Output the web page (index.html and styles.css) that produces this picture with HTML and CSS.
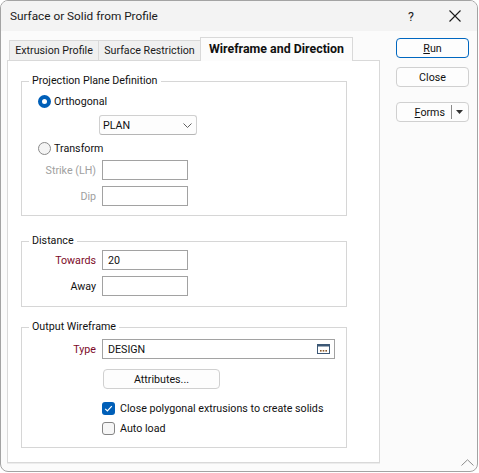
FILE: index.html
```html
<!DOCTYPE html>
<html>
<head>
<meta charset="utf-8">
<title>Surface or Solid from Profile</title>
<link rel="stylesheet" href="styles.css">
</head>
<body>
<div class="window">
  <div class="titlebar">
    <span class="title">Surface or Solid from Profile</span>
    <span class="help">?</span>
    <span class="closex">
      <svg width="12" height="12" viewBox="0 0 12 12"><path d="M0.5 0.5 L11.5 11.5 M11.5 0.5 L0.5 11.5" stroke="#1a1a1a" stroke-width="1.1" fill="none"/></svg>
    </span>
  </div>
  <div class="main">
    <div class="left">
      <div class="tabs">
        <div class="tab t1">Extrusion Profile</div>
        <div class="tab t2">Surface Restriction</div>
        <div class="tab active">Wireframe and Direction</div>
      </div>
      <div class="panel">
        <fieldset class="group g1">
          <legend>Projection Plane Definition</legend>
          <div class="radio-row r1"><span class="radio on"></span><span class="opt">Orthogonal</span></div>
          <div class="select"><span>PLAN</span>
            <svg class="chev" width="9" height="5" viewBox="0 0 9 5"><path d="M0.5 0.5 L4.5 4.5 L8.5 0.5" stroke="#606060" stroke-width="1" fill="none"/></svg>
          </div>
          <div class="radio-row r2"><span class="radio"></span><span class="opt">Transform</span></div>
          <div class="field f-strike"><span class="lbl disabled">Strike (LH)</span><span class="input short"></span></div>
          <div class="field f-dip"><span class="lbl disabled">Dip</span><span class="input short"></span></div>
        </fieldset>

        <fieldset class="group g2">
          <legend>Distance</legend>
          <div class="field f-towards"><span class="lbl req">Towards</span><span class="input short">20</span></div>
          <div class="field f-away"><span class="lbl">Away</span><span class="input short"></span></div>
        </fieldset>

        <fieldset class="group g3">
          <legend>Output Wireframe</legend>
          <div class="field f-type"><span class="lbl req">Type</span>
            <span class="input long"><span>DESIGN</span>
              <svg class="browse" width="13" height="10" viewBox="0 0 13 10">
                <rect x="0.5" y="0.5" width="12" height="9" fill="#ffffff" stroke="#3d5876" stroke-width="1"/>
                <rect x="0.5" y="0.5" width="12" height="2" fill="#3d5876"/>
                <rect x="3" y="6" width="1.6" height="1.6" fill="#8a5a2a"/>
                <rect x="5.7" y="6" width="1.6" height="1.6" fill="#8a5a2a"/>
                <rect x="8.4" y="6" width="1.6" height="1.6" fill="#8a5a2a"/>
              </svg>
            </span>
          </div>
          <div class="btn attr">Attributes...</div>
          <div class="check-row c1"><span class="check on">
            <svg width="13" height="13" viewBox="0 0 13 13"><path d="M3.2 6.8 L5.4 9 L9.8 4.2" stroke="#ffffff" stroke-width="1.2" fill="none"/></svg>
          </span><span class="opt">Close polygonal extrusions to create solids</span></div>
          <div class="check-row c2"><span class="check"></span><span class="opt">Auto load</span></div>
        </fieldset>
      </div>
    </div>
    <div class="right">
      <div class="btn side run"><span><u>R</u>un</span></div>
      <div class="btn side close">Close</div>
      <div class="btn side forms">
        <span class="forms-main"><u>F</u>orms</span>
        <span class="forms-div"></span>
        <span class="forms-arrow"><svg width="7" height="4" viewBox="0 0 7 4"><path d="M0 0 L7 0 L3.5 4 Z" fill="#333333"/></svg></span>
      </div>
    </div>
  </div>
  <svg class="grip" width="13" height="7" viewBox="0 0 13 7"><path d="M0.5 6.5 L6.5 0.8 L12.5 6.5" stroke="#8c8c8c" stroke-width="1" fill="none"/></svg>
</div>
</body>
</html>
```
FILE: styles.css
```css
html, body {
  margin: 0;
  padding: 0;
  background: #ffffff;
}
body {
  font-family: Roboto, "Liberation Sans", sans-serif;
  font-size: 10.7px;
  color: #111111;
}
.window {
  position: relative;
  width: 478px;
  height: 472px;
  box-sizing: border-box;
  border: 1px solid #a3a3a3;
  border-radius: 8px;
  background: #fbfbfb;
  overflow: hidden;
}
.titlebar {
  height: 30px;
  background: #f3f3f3;
  display: flex;
  align-items: center;
}
.title {
  font-size: 11.8px;
  color: #1a1a1a;
  margin-left: 9px;
  flex: 1;
}
.help {
  width: 20px;
  text-align: center;
  font-size: 12.5px;
  color: #1a1a1a;
  margin-right: 11px;
}
.closex {
  width: 45px;
  display: flex;
  justify-content: center;
  align-items: center;
}
.closex svg { display: block; }

.main {
  display: flex;
  padding-top: 6px;
}
.left {
  margin-left: 6px;
  width: 373px;
}
.tabs {
  display: flex;
  align-items: flex-end;
  height: 23px;
  padding-left: 2px;
}
.tab {
  box-sizing: border-box;
  height: 20px;
  border: 1px solid #d9d9d9;
  border-bottom: none;
  background: #f0f0f0;
  text-align: center;
  line-height: 19px;
  color: #1a1a1a;
}
.t1 { width: 90px; }
.t2 { width: 103px; margin-left: -1px; }
.tab.active {
  width: 153px;
  height: 24px;
  margin-left: -1px;
  margin-bottom: -1px;
  position: relative;
  z-index: 1;
  background: #fcfcfc;
  font-weight: bold;
  font-size: 12.4px;
  line-height: 21px;
  color: #111111;
}
.panel {
  box-sizing: border-box;
  height: 403px;
  border: 1px solid #d9d9d9;
  background: #ffffff;
  padding-left: 13px;
  box-shadow: 0 1px 0 #ececec;
}

.group {
  box-sizing: border-box;
  width: 326px;
  margin: 0;
  padding: 0;
  border: 1px solid #d6d6d6;
  min-width: 0;
}
.group legend {
  padding: 0 3px;
  margin-left: 7px;
  line-height: 14px;
  height: 14px;
  color: #111111;
}
.g1 { margin-top: 13px; padding-bottom: 9px; }
.g2 { margin-top: 18px; padding-bottom: 10px; }
.g3 { margin-top: 13px; padding-bottom: 12px; }

.radio-row {
  display: flex;
  align-items: center;
  height: 13px;
  margin-top: 7px;
  padding-left: 16px;
}
.opt { line-height: 13px; white-space: nowrap; }
.radio {
  box-sizing: border-box;
  width: 13px;
  height: 13px;
  border-radius: 50%;
  border: 1px solid #8a8a8a;
  background: #f4f4f4;
  margin-right: 3px;
  flex: none;
}
.radio.on {
  border: 4px solid #005fb8;
  background: #ffffff;
}

.select {
  box-sizing: border-box;
  display: flex;
  align-items: center;
  justify-content: space-between;
  margin-top: 7px;
  margin-left: 77px;
  width: 98px;
  height: 20px;
  border: 1px solid #d0d0d0;
  border-bottom-color: #b5b5b5;
  border-radius: 3px;
  background: #fdfdfd;
  padding: 0 4px 0 3px;
}
.chev { display: block; margin-top: 1px; }

.field {
  display: flex;
  align-items: center;
  height: 20px;
}
.f-strike { margin-top: 5px; }
.f-dip { margin-top: 6px; }
.f-towards { margin-top: 2px; }
.f-away { margin-top: 6px; }
.f-type { margin-top: 5px; }
.lbl {
  width: 74px;
  text-align: right;
  margin-right: 6px;
  white-space: nowrap;
}
.lbl.disabled { color: #a0a0a0; }
.lbl.req { color: #7d0a28; }
.input {
  box-sizing: border-box;
  height: 20px;
  border: 1px solid #a2a2a2;
  background: #ffffff;
  padding-left: 5px;
  display: flex;
  align-items: center;
}
.input.short { width: 86px; }
.input.long { width: 233px; padding-right: 4px; justify-content: space-between; }
.browse { display: block; }

.btn {
  box-sizing: border-box;
  height: 20px;
  border: 1px solid #d0d0d0;
  border-radius: 4px;
  background: #fdfdfd;
  display: flex;
  align-items: center;
  justify-content: center;
  color: #111111;
}
.attr {
  margin-top: 10px;
  margin-left: 81px;
  width: 117px;
}

.check-row {
  display: flex;
  align-items: center;
  height: 13px;
  margin-left: 80px;
}
.c1 { margin-top: 13px; }
.c2 { margin-top: 7px; }
.check {
  box-sizing: border-box;
  width: 13px;
  height: 13px;
  border: 1px solid #858585;
  border-radius: 3px;
  background: #f6f6f6;
  margin-right: 5px;
  flex: none;
  position: relative;
}
.check.on {
  border: none;
  background: #005fb8;
}
.check svg { display: block; }

.right {
  margin-left: 16px;
  width: 73px;
  display: flex;
  flex-direction: column;
}
.side { width: 73px; }
.run { margin-top: 1px; border-color: #0067c0; }
.close { margin-top: 9px; }
.forms {
  margin-top: 15px;
  justify-content: flex-start;
}
.forms-main {
  width: 48px;
  text-align: right;
  padding-right: 6px;
}
.forms-div {
  width: 1px;
  height: 14px;
  background: #8a8a8a;
}
.forms-arrow {
  margin-left: 4px;
  display: flex;
  align-items: center;
}
.forms-arrow svg { display: block; }

.grip {
  position: absolute;
  right: 3px;
  bottom: 5px;
  display: block;
}
```
